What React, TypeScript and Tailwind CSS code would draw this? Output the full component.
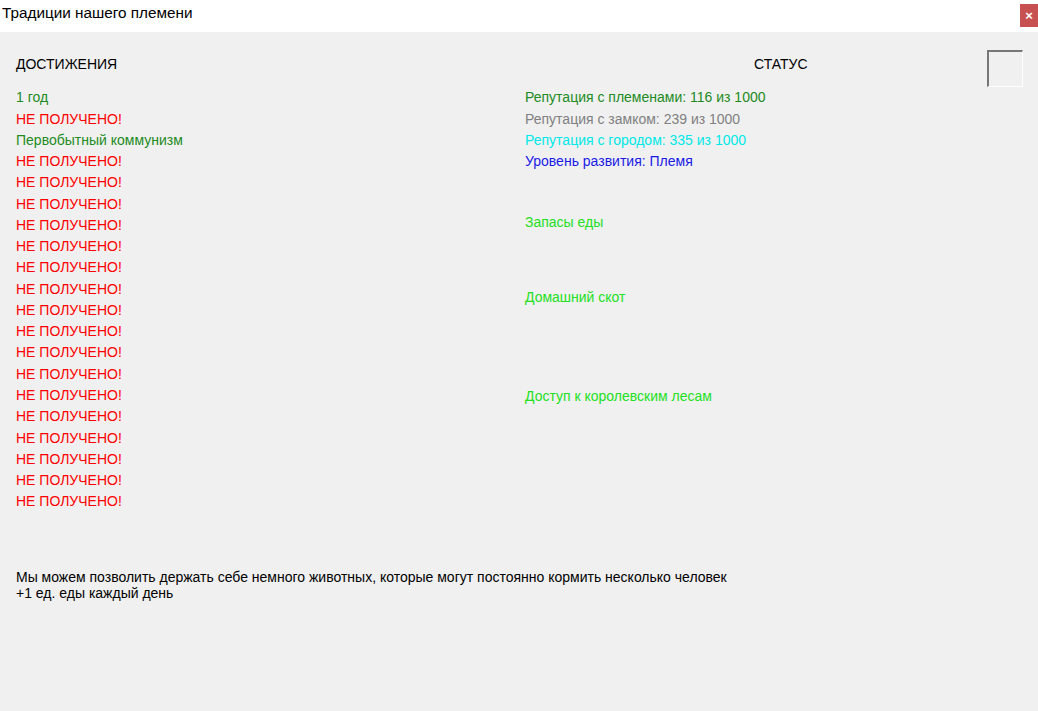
import React from "react";

const notObtained = Array.from({ length: 17 });

export default function App() {
  return (
    <div className="w-[1038px] h-[711px] flex flex-col bg-[#f0f0f0] overflow-hidden" style={{ fontFamily: '"Liberation Sans", Arial, sans-serif' }}>
      <div className="h-[32px] bg-white flex items-start justify-between shrink-0">
        <div className="pl-[2px] pt-[4px] text-[15.3px] leading-[18px] text-black">Традиции нашего племени</div>
        <div className="mt-[4px] w-[18px] h-[23px] bg-[#c75050] flex items-center justify-center text-white text-[13px] font-bold leading-none">×</div>
      </div>
      <div className="flex-1 flex flex-col pl-[16px] pt-[18px] text-[14px] leading-[21.26px]">
        <div className="flex">
          <div className="w-[509px] flex flex-col">
            <div className="pt-[4px] text-[#000]">ДОСТИЖЕНИЯ</div>
            <div className="mt-[12px] flex flex-col">
              <div className="text-[#228b22]">1 год</div>
              <div className="text-[#ff0000]">НЕ ПОЛУЧЕНО!</div>
              <div className="text-[#228b22]">Первобытный коммунизм</div>
              {notObtained.map((_, i) => (
                <div key={i} className="text-[#ff0000]">НЕ ПОЛУЧЕНО!</div>
              ))}
            </div>
          </div>
          <div className="w-[462px] flex flex-col">
            <div className="pt-[4px] pl-[229px] text-black">СТАТУС</div>
            <div className="mt-[12px] flex flex-col">
              <div className="text-[#228b22]">Репутация с племенами: 116 из 1000</div>
              <div className="text-[#808080]">Репутация с замком: 239 из 1000</div>
              <div className="text-[#00e8e8]">Репутация с городом: 335 из 1000</div>
              <div className="text-[#1a1ae6]">Уровень развития: Племя</div>
              <div className="mt-[40px] text-[#22e022]">Запасы еды</div>
              <div className="mt-[53px] text-[#22e022]">Домашний скот</div>
              <div className="mt-[78px] text-[#22e022]">Доступ к королевским лесам</div>
            </div>
          </div>
          <div className="w-[36px] h-[37px] border-t-2 border-l-2 border-[#777777] border-r border-b border-r-white border-b-white"></div>
        </div>
        <div className="mt-[56px] text-[14px] leading-[16px] text-black">
          <div>Мы можем позволить держать себе немного животных, которые могут постоянно кормить несколько человек</div>
          <div>+1 ед. еды каждый день</div>
        </div>
      </div>
    </div>
  );
}
